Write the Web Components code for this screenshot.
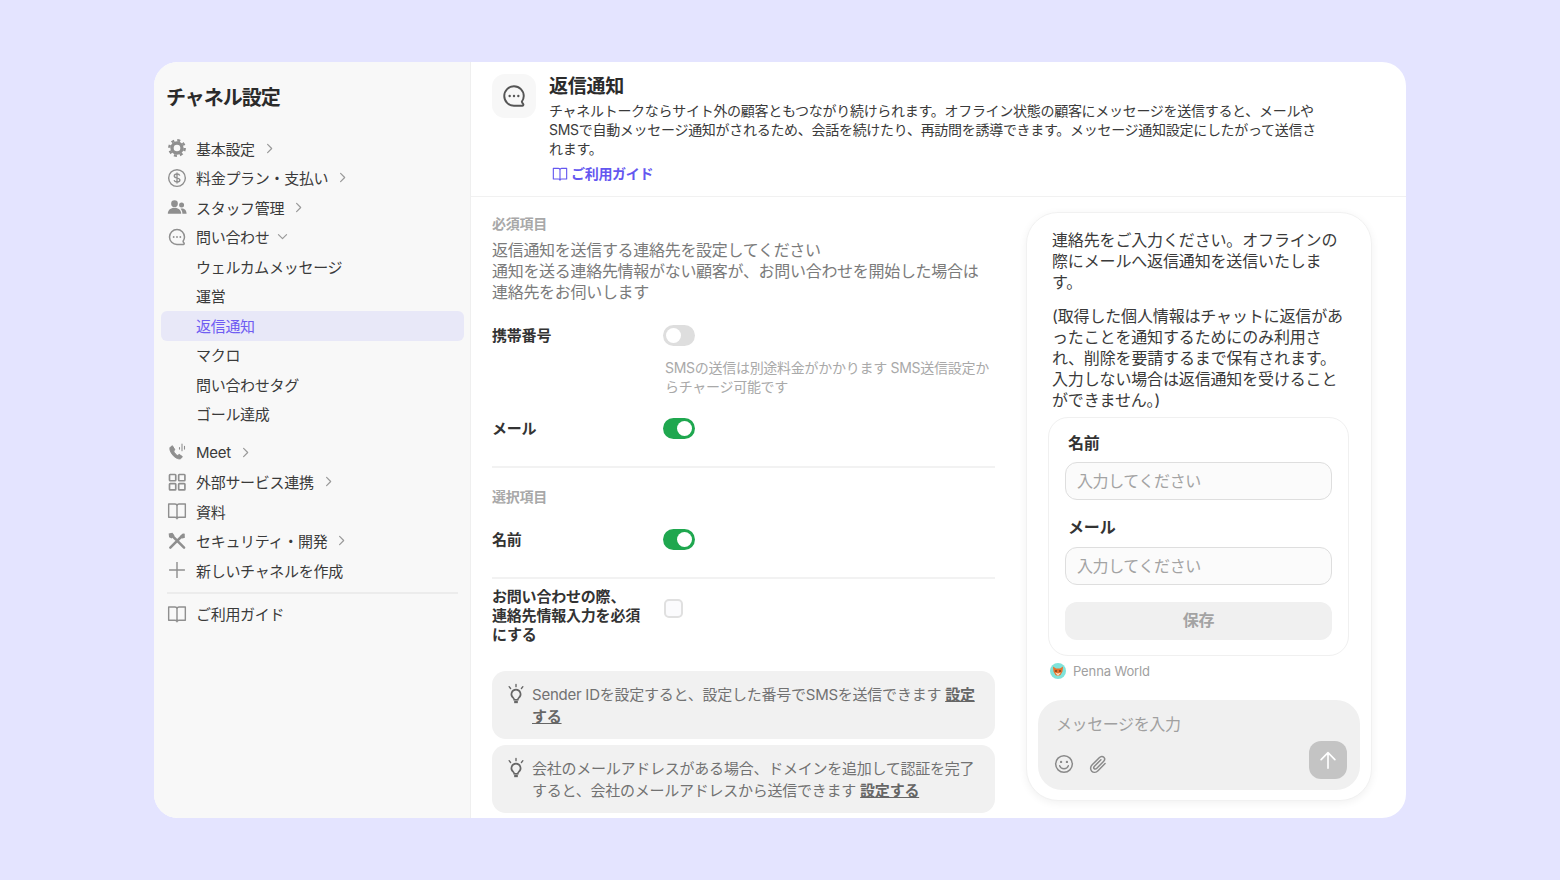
<!DOCTYPE html>
<html lang="ja">
<head>
<meta charset="utf-8">
<title>チャネル設定</title>
<style>
  html, body { height: 100%; }
  body {
    margin: 0;
    background: #e4e4ff;
    color: #333;
    font-family: Inter, "Noto Sans CJK JP", sans-serif;
    display: flex;
    align-items: center;
    justify-content: center;
  }
</style>
</head>
<body>
<settings-window>
  <channel-sidebar slot="sidebar">
    <nav-item icon="gear" chevron="right">基本設定</nav-item>
    <nav-item icon="dollar" chevron="right">料金プラン・支払い</nav-item>
    <nav-item icon="people" chevron="right">スタッフ管理</nav-item>
    <nav-item icon="chat" chevron="down">問い合わせ</nav-item>
    <nav-item sub>ウェルカムメッセージ</nav-item>
    <nav-item sub>運営</nav-item>
    <nav-item sub active>返信通知</nav-item>
    <nav-item sub>マクロ</nav-item>
    <nav-item sub>問い合わせタグ</nav-item>
    <nav-item sub>ゴール達成</nav-item>
    <nav-item slot="second" icon="phone" chevron="right">Meet</nav-item>
    <nav-item slot="second" icon="grid" chevron="right">外部サービス連携</nav-item>
    <nav-item slot="second" icon="book">資料</nav-item>
    <nav-item slot="second" icon="tools" chevron="right">セキュリティ・開発</nav-item>
    <nav-item slot="second" icon="plus">新しいチャネルを作成</nav-item>
    <nav-item slot="third" icon="book">ご利用ガイド</nav-item>
  </channel-sidebar>
  <page-header slot="header"></page-header>
  <settings-form slot="form"></settings-form>
  <chat-preview slot="preview"></chat-preview>
</settings-window>

<script>
const ICONS = {
  gear: '<circle cx="12" cy="12" r="6" fill="none" stroke="currentColor" stroke-width="4"/><circle cx="12" cy="12" r="9.2" fill="none" stroke="currentColor" stroke-width="3" stroke-dasharray="3.6 3.63"/>',
  dollar: '<circle cx="12" cy="12" r="10" fill="none" stroke="currentColor" stroke-width="1.7"/><path d="M15.3 9.2c-.3-1.2-1.6-2-3.3-2-1.9 0-3.3 1-3.3 2.4 0 3.3 6.8 1.6 6.8 4.8 0 1.4-1.500 2.400-3.500 2.400-1.800 0-3.200-.9-3.500-2.200M12 5.500v13" fill="none" stroke="currentColor" stroke-width="1.600"/>',
  people: '<circle cx="9" cy="8" r="4" fill="currentColor"/><circle cx="17.500" cy="9.500" r="3" fill="currentColor"/><path d="M1 20c0-4.300 3.500-7 8-7s8 2.700 8 7z" fill="currentColor"/><path d="M18.500 20c0-2.500-.8-4.500-2.300-6 .5-.1 1-.1 1.500-.1 3.300 0 5.800 2.200 5.800 6.100z" fill="currentColor"/>',
  chat: '<path d="M21 12a9 9 0 1 0-9 9h7.600c.9 0 1.400-1 .8-1.700-.7-.8-1.200-1.600-1.100-2.200A8.900 8.900 0 0 0 21 12Z" fill="none" stroke="currentColor" stroke-width="1.800"/><circle cx="8" cy="12" r="1.100" fill="currentColor"/><circle cx="12" cy="12" r="1.100" fill="currentColor"/><circle cx="16" cy="12" r="1.100" fill="currentColor"/>',
  phone: '<path d="M6.500 4.500 4.200 6c-1 .7-1 2.600-.1 5 1.600 4 4.900 7.500 8.400 8.800 2.100.8 3.800.6 4.600-.4l1.300-1.900-3.800-2.700-1.600 1.500c-1.800-.6-4.400-3.400-5-5.500l1.500-1.400z" fill="currentColor" stroke="currentColor" stroke-width="1.200" stroke-linejoin="round"/><path d="M15 6.500v2M18 2.500v8M21 5v3.500" fill="none" stroke="currentColor" stroke-width="1.300" stroke-linecap="round"/>',
  grid: '<g fill="none" stroke="currentColor" stroke-width="2"><rect x="3" y="3" width="7.500" height="7.500" rx=".8"/><rect x="14" y="3" width="7.500" height="7.500" rx=".8"/><rect x="3" y="14" width="7.500" height="7.500" rx=".8"/><rect x="14" y="14" width="7.500" height="7.500" rx=".8"/></g>',
  book: '<path d="M2 3.500h7.500c1.500 0 2.500 1 2.500 2.500 0-1.500 1-2.500 2.500-2.500H22v16h-7.500c-1.300 0-2.500.5-2.500 1.800 0-1.300-1.200-1.800-2.500-1.800H2zM12 6v15" fill="none" stroke="currentColor" stroke-width="1.700" stroke-linejoin="round"/>',
  tools: '<path d="M5 4.500 20.500 20M19.500 4.500 4 20" fill="none" stroke="currentColor" stroke-width="3" stroke-linecap="round"/><path d="M2.500 7.500 2 3l4.500-.8L9 5.500 5.500 9zM21 3l-4.500 2-1 3 3 1 3-1z" fill="currentColor"/>',
  plus: '<path d="M12 2.500v19M2.500 12h19" fill="none" stroke="currentColor" stroke-width="1.700"/>',
  bulb: '<path d="M12 7.200a5 5 0 0 0-3 9c.7.600 1 1.300 1 2.100h4c0-.8.300-1.500 1-2.100a5 5 0 0 0-3-9Z" fill="none" stroke="currentColor" stroke-width="1.800"/><path d="M10 19.300h4V22h-4z" fill="currentColor"/><path d="M12 1.500v2.500M4.500 4l1.600 2M19.500 4l-1.600 2" fill="none" stroke="currentColor" stroke-width="1.500" stroke-linecap="round"/>',
  smile: '<circle cx="12" cy="12" r="10" fill="none" stroke="currentColor" stroke-width="1.800"/><circle cx="8.500" cy="9.500" r="1.400" fill="currentColor"/><circle cx="15.500" cy="9.500" r="1.400" fill="currentColor"/><path d="M6.800 14c.8 2.300 2.800 3.600 5.200 3.600s4.400-1.300 5.200-3.600" fill="none" stroke="currentColor" stroke-width="1.700" stroke-linecap="round"/>',
  clip: '<path d="M20.500 11.500 12 20c-2.300 2.300-5.600 2.500-7.500.6S2.600 15.300 5 13l8.800-8.800c1.600-1.600 3.900-1.700 5.200-.4s1.200 3.600-.4 5.200l-8.300 8.300c-.9.900-2.200 1-2.900.3s-.6-2 .3-2.900L15.500 7" fill="none" stroke="currentColor" stroke-width="1.800" stroke-linecap="round"/>',
  up: '<path d="M12 21V4M4.500 11.500 12 4l7.500 7.500" fill="none" stroke="currentColor" stroke-width="1.800" stroke-linecap="round" stroke-linejoin="round"/>',
  right: '<path d="M8.500 4.500 16 12l-7.500 7.500" fill="none" stroke="currentColor" stroke-width="2.200" stroke-linecap="round" stroke-linejoin="round"/>',
  down: '<path d="M4.500 8.500 12 16l7.500-7.500" fill="none" stroke="currentColor" stroke-width="2.200" stroke-linecap="round" stroke-linejoin="round"/>'
};

class UiIcon extends HTMLElement {
  connectedCallback() {
    const root = this.shadowRoot || this.attachShadow({ mode: 'open' });
    const size = this.getAttribute('size') || 18;
    root.innerHTML = `
      <style>
        :host { display: inline-flex; flex: none; width: ${size}px; height: ${size}px; }
        svg { width: 100%; height: 100%; display: block; }
      </style>
      <svg viewBox="0 0 24 24">${ICONS[this.getAttribute('name')] || ''}</svg>`;
  }
}

class NavItem extends HTMLElement {
  constructor() {
    super();
    this.attachShadow({ mode: 'open' });
  }

  connectedCallback() {
    const icon = this.getAttribute('icon');
    const chevron = this.getAttribute('chevron');
    this.shadowRoot.innerHTML = `
      <style>
        :host {
          display: flex;
          align-items: center;
          box-sizing: border-box;
          height: 29.5px;
          padding: 0 0 1px 6px;
          border-radius: 6px;
          font-size: 15px;
          letter-spacing: -.3px;
          color: #3a3a3a;
          white-space: nowrap;
        }
        :host([sub]) { padding-left: 35px; }
        :host([active]) { background: #e8e8f8; color: #6f5cf2; }
        :host([chevron="down"]) .chev { margin-left: 6px; }
        .icon { color: #8f8f8f; margin-right: 9px; }
        .chev { color: #999; margin-left: 8px; }
      </style>
      ${icon ? `<ui-icon class="icon" name="${icon}" size="20"></ui-icon>` : ''}
      <slot></slot>
      ${chevron ? `<ui-icon class="chev" name="${chevron}" size="13"></ui-icon>` : ''}`;
  }
}

class ChannelSidebar extends HTMLElement {
  constructor() {
    super();
    this.attachShadow({ mode: 'open' }).innerHTML = `
      <style>
        :host {
          display: block;
          box-sizing: border-box;
          flex: none;
          width: 317px;
          height: 100%;
          padding: 21px 6px 0 7px;
          background: #f8f8f8;
          border-right: 1px solid #efefef;
        }
        h1 {
          margin: 0 0 21px 5px;
          font-size: 20px;
          line-height: 30px;
          font-weight: 700;
          letter-spacing: -1px;
          color: #2b2b2b;
        }
        .second { margin-top: 9px; }
        hr {
          margin: 6px 6px 6px 6px;
          border: 0;
          height: 2px;
          background: #ececec;
        }
      </style>
      <h1>チャネル設定</h1>
      <slot></slot>
      <div class="second"><slot name="second"></slot></div>
      <hr>
      <slot name="third"></slot>`;
  }
}

class PageHeader extends HTMLElement {
  constructor() {
    super();
    this.attachShadow({ mode: 'open' }).innerHTML = `
      <style>
        :host {
          display: flex;
          gap: 13px;
          height: 135px;
          box-sizing: border-box;
          padding: 12px 0 0 21px;
          border-bottom: 1px solid #f1f1f1;
        }
        .badge {
          flex: none;
          width: 44px;
          height: 44px;
          border-radius: 13px;
          background: #f7f7f7;
          color: #555;
          display: flex;
          align-items: center;
          justify-content: center;
        }
        h2 {
          margin: 0;
          font-size: 19px;
          line-height: 25px;
          font-weight: 700;
          letter-spacing: -.25px;
          color: #2b2b2b;
        }
        p {
          margin: 3px 0 0;
          font-size: 14px;
          line-height: 18.750px;
          letter-spacing: -.29px;
          color: #3a3a3a;
          white-space: nowrap;
        }
        a {
          display: inline-flex;
          align-items: center;
          gap: 3px;
          margin: 5.500px 0 0 3px;
          font-size: 14px;
          line-height: 20px;
          font-weight: 700;
          letter-spacing: -.3px;
          color: #6457f0;
          text-decoration: none;
        }
      </style>
      <div class="badge"><ui-icon name="chat" size="26"></ui-icon></div>
      <div>
        <h2>返信通知</h2>
        <p>チャネルトークならサイト外の顧客ともつながり続けられます。オフライン状態の顧客にメッセージを送信すると、メールや<br>SMSで自動メッセージ通知がされるため、会話を続けたり、再訪問を誘導できます。メッセージ通知設定にしたがって送信さ<br>れます。</p>
        <a href="#"><ui-icon name="book" size="16"></ui-icon>ご利用ガイド</a>
      </div>`;
  }
}

class ToggleSwitch extends HTMLElement {
  constructor() {
    super();
    this.attachShadow({ mode: 'open' }).innerHTML = `
      <style>
        :host {
          display: block;
          position: relative;
          width: 32px;
          height: 21px;
          border-radius: 11px;
          background: #dedede;
          cursor: pointer;
        }
        :host([on]) { background: #1fa74f; }
        i {
          position: absolute;
          top: 3px;
          left: 3px;
          width: 15px;
          height: 15px;
          border-radius: 50%;
          background: #fff;
        }
        :host([on]) i { left: 14px; }
      </style>
      <i></i>`;
    this.addEventListener('click', () => this.toggleAttribute('on'));
  }
}

class SettingRow extends HTMLElement {
  constructor() {
    super();
    this.attachShadow({ mode: 'open' }).innerHTML = `
      <style>
        :host {
          display: grid;
          grid-template-columns: 171px 1fr;
          align-items: start;
          font-size: 15px;
          line-height: 21px;
          font-weight: 700;
          letter-spacing: -.2px;
          color: #333;
        }
      </style>
      <div><slot name="label"></slot></div>
      <div><slot></slot></div>`;
  }
}

class TipBox extends HTMLElement {
  constructor() {
    super();
    this.attachShadow({ mode: 'open' }).innerHTML = `
      <style>
        :host {
          display: flex;
          gap: 5px;
          box-sizing: border-box;
          height: 68px;
          padding: 13px 18px 0 13px;
          border-radius: 14px;
          background: #f1f1f1;
          font-size: 15px;
          line-height: 21.500px;
          letter-spacing: -.24px;
          color: #727272;
        }
        ui-icon { margin-top: -1px; color: #666; }
      </style>
      <ui-icon name="bulb" size="22"></ui-icon>
      <div><slot></slot></div>`;
  }
}

class SettingsForm extends HTMLElement {
  constructor() {
    super();
    this.attachShadow({ mode: 'open' }).innerHTML = `
      <style>
        :host {
          display: block;
          flex: none;
          width: 503px;
          padding-top: 18px;
        }
        .cap {
          font-size: 14px;
          line-height: 18px;
          font-weight: 700;
          letter-spacing: -.25px;
          color: #a8a8a8;
        }
        .lead {
          margin: 7px 0 22px;
          font-size: 16px;
          line-height: 21px;
          letter-spacing: -.3px;
          color: #7b7b7b;
        }
        .hint {
          margin: 12px 0 22px 173px;
          font-size: 14px;
          line-height: 19px;
          letter-spacing: -.28px;
          font-weight: 400;
          color: #a9a9a9;
        }
        hr { border: 0; height: 2px; background: #f2f2f2; margin: 27px 0 20px; }
        .cb {
          width: 15px;
          height: 15px;
          margin: 12px 0 0 1px;
          border: 2px solid #e0e0e0;
          border-radius: 5px;
          background: #fbfbfd;
        }
        .q { line-height: 19px; display: block; }
        .row-q { margin-top: -12px; }
        .tips { display: flex; flex-direction: column; gap: 6px; margin-top: 27px; }
        a { color: #666; font-weight: 700; text-decoration: underline; }
      </style>
      <div class="cap">必須項目</div>
      <div class="lead">返信通知を送信する連絡先を設定してください<br>通知を送る連絡先情報がない顧客が、お問い合わせを開始した場合は<br>連絡先をお伺いします</div>
      <setting-row><span slot="label">携帯番号</span><toggle-switch></toggle-switch></setting-row>
      <div class="hint">SMSの送信は別途料金がかかります SMS送信設定か<br>らチャージ可能です</div>
      <setting-row><span slot="label">メール</span><toggle-switch on></toggle-switch></setting-row>
      <hr>
      <div class="cap">選択項目</div>
      <setting-row style="margin-top:23px"><span slot="label">名前</span><toggle-switch on></toggle-switch></setting-row>
      <hr>
      <setting-row class="row-q"><span slot="label" class="q">お問い合わせの際、<br>連絡先情報入力を必須<br>にする</span><div class="cb"></div></setting-row>
      <div class="tips">
        <tip-box>Sender IDを設定すると、設定した番号でSMSを送信できます <a href="#">設定する</a></tip-box>
        <tip-box>会社のメールアドレスがある場合、ドメインを追加して認証を完了<br>すると、会社のメールアドレスから送信できます <a href="#">設定する</a></tip-box>
      </div>`;
  }
}

class ChatPreview extends HTMLElement {
  constructor() {
    super();
    this.attachShadow({ mode: 'open' }).innerHTML = `
      <style>
        :host {
          display: block;
          box-sizing: border-box;
          flex: none;
          width: 346px;
          height: 589px;
          margin-top: 15px;
          padding: 17px 11px 0 11px;
          border: 1px solid #f1f1f1;
          border-radius: 32px;
          background: #fff;
          box-shadow: 0 2px 8px rgba(0,0,0,.06);
          font-size: 16px;
          line-height: 21px;
          letter-spacing: -.15px;
          color: #3a3a3a;
        }
        .msg { padding-left: 14px; white-space: nowrap; }
        .msg p { margin: 0 0 13px; }
        .msg p:last-child { margin: 0; }
        .card {
          box-sizing: border-box;
          width: 301px;
          height: 239px;
          margin: 6px 0 0 10px;
          padding: 14px 16px 0 16px;
          border: 1px solid #f0f0f0;
          border-radius: 20px;
        }
        .lbl { margin-left: 3px; line-height: 22px; font-weight: 700; color: #333; }
        .field {
          box-sizing: border-box;
          height: 38px;
          margin: 8px 0 16px;
          padding-left: 11px;
          border: 1px solid #dedede;
          border-radius: 12px;
          background: #fbfbfb;
          line-height: 36px;
          letter-spacing: -.4px;
          color: #a3a3a3;
        }
        .field.last { margin: 9px 0 17px; }
        .btn {
          height: 38px;
          border-radius: 12px;
          background: #f0f0f0;
          text-align: center;
          line-height: 37px;
          font-weight: 700;
          color: #a3a3a3;
        }
        .by {
          display: flex;
          align-items: center;
          gap: 7px;
          margin: 7px 0 0 12px;
          font-size: 13px;
          line-height: 16px;
          letter-spacing: -.12px;
          color: #a0a0a0;
        }
        .avatar { width: 16px; height: 16px; display: block; }
        .composer {
          position: relative;
          box-sizing: border-box;
          height: 90px;
          margin-top: 21px;
          padding: 14px 18px 0;
          border-radius: 24px;
          background: #f0f0f0;
          letter-spacing: -.4px;
          color: #a0a0a0;
        }
        .tools { display: flex; gap: 14px; margin: 19px 0 0 -2px; color: #8a8a8a; }
        .send {
          position: absolute;
          right: 13px;
          bottom: 11px;
          width: 38px;
          height: 38px;
          border-radius: 12px;
          background: #c4c4c4;
          color: #fff;
          display: flex;
          align-items: center;
          justify-content: center;
        }
      </style>
      <div class="msg">
        <p>連絡先をご入力ください。オフラインの<br>際にメールへ返信通知を送信いたしま<br>す。</p>
        <p>(取得した個人情報はチャットに返信があ<br>ったことを通知するためにのみ利用さ<br>れ、削除を要請するまで保有されます。<br>入力しない場合は返信通知を受けること<br>ができません。)</p>
      </div>
      <div class="card">
        <div class="lbl">名前</div>
        <div class="field">入力してください</div>
        <div class="lbl">メール</div>
        <div class="field last">入力してください</div>
        <div class="btn">保存</div>
      </div>
      <div class="by">
        <svg class="avatar" viewBox="0 0 16 16">
          <circle cx="8" cy="8" r="8" fill="#7fe3da"/>
          <path d="M3 3.500 6 5.500h4l3-2-.5 5L10.500 12 8 13l-2.500-1-2-3.500z" fill="#e8702a"/>
          <path d="M5 9.500 8 13l3-3.500-3 1z" fill="#f7e3c8"/>
          <circle cx="6" cy="8" r=".8" fill="#3a2416"/><circle cx="10" cy="8" r=".8" fill="#3a2416"/>
        </svg>
        Penna World
      </div>
      <div class="composer">
        メッセージを入力
        <div class="tools"><ui-icon name="smile" size="20"></ui-icon><ui-icon name="clip" size="20"></ui-icon></div>
        <div class="send"><ui-icon name="up" size="22"></ui-icon></div>
      </div>`;
  }
}

class SettingsWindow extends HTMLElement {
  constructor() {
    super();
    this.attachShadow({ mode: 'open' }).innerHTML = `
      <style>
        :host {
          display: flex;
          width: 1252px;
          height: 756px;
          border-radius: 24px;
          background: #fff;
          overflow: hidden;
        }
        main { flex: 1; min-width: 0; }
        .body { display: flex; gap: 31px; padding-left: 21px; }
      </style>
      <slot name="sidebar"></slot>
      <main>
        <slot name="header"></slot>
        <div class="body"><slot name="form"></slot><slot name="preview"></slot></div>
      </main>`;
  }
}

customElements.define('ui-icon', UiIcon);
customElements.define('nav-item', NavItem);
customElements.define('channel-sidebar', ChannelSidebar);
customElements.define('page-header', PageHeader);
customElements.define('toggle-switch', ToggleSwitch);
customElements.define('setting-row', SettingRow);
customElements.define('tip-box', TipBox);
customElements.define('settings-form', SettingsForm);
customElements.define('chat-preview', ChatPreview);
customElements.define('settings-window', SettingsWindow);
</script>
</body>
</html>
